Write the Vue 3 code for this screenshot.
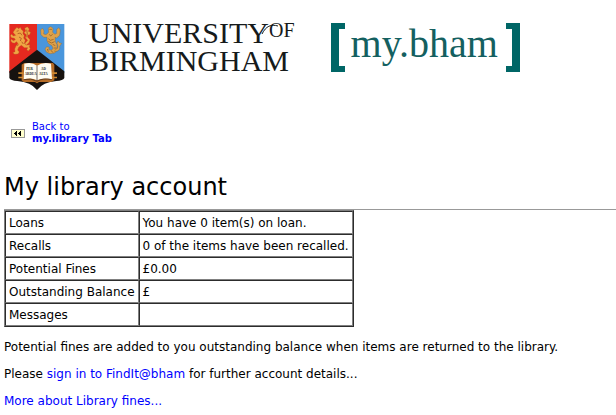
<template>
    <div class="page">
        <header class="banner">
            <a class="university" href="#">
                <svg class="crest" viewBox="27 26 166 198" role="img" aria-label="Crest">
                    <path d="M27 26H110V105L27 174Z" fill="#e5291f" />
                    <path d="M110 26H192V174L110 105Z" fill="#4a96dc" />
                    <path d="M110 103L192 168V188Q188 196 168 197Q128 200 110 224Q92 200 51 197Q31 196 27 188V168Z" fill="#17120f" />
                    <g fill="#f0a544" stroke="#a8541c" stroke-width="1">
                        <path d="M44 42L50 36L55 40L60 36L64 43L69 47L68 55L72 61L70 68L75 75L72 84L80 89L89 88L87 94L90 100L84 107L79 103L82 97L72 97L63 90L55 96L52 104L57 110L53 116L43 117L37 112L44 109L43 101L47 91L53 85L49 79L42 84L36 82L31 77L33 71L39 76L45 73L42 69L33 67L30 61L34 56L39 62L46 60L42 56L38 51Z" />
                        <path d="M74 84L82 75L75 67L78 58L71 52L76 47L73 39L81 34L87 41L84 48L91 51L88 58L83 59L82 65L89 73L86 82L77 90Z" />
                    </g>
                    <path d="M49 48L55 46M52 55L60 53L65 60M56 65L63 69L60 77M64 79L69 86M49 91L55 88M79 43L81 56L79 66" fill="none" stroke="#9b4418" stroke-width="2" />
                    <g fill="#dea24a" stroke="#8b5a22" stroke-width="1">
                        <path d="M144 39Q151 29 158 40L157 51L164 57L169 54L169 43L175 37L180 44L178 60L169 68L164 66L165 79L170 88L171 103L163 113L149 115L138 110L134 101L139 94L147 96L145 102L152 105L158 100L155 91L145 85L140 76L140 66L130 66L122 58L121 43L127 39L131 47L130 56L137 58L145 51Z" />
                        <path d="M163 109Q181 108 178 93L184 84L178 83L173 77L170 84L173 92Q174 101 164 103Z" />
                    </g>
                    <path d="M147 42H155M147 57L151 62L157 57M144 70L150 75L160 72M144 78L153 83L163 79M157 87L165 91M160 98L169 98M152 106L159 112M141 101L144 109" fill="none" stroke="#885621" stroke-width="2" />
                    <path d="M64 148L72 143L158 143L162 149V195L153 200H116L110 204L104 200H70L64 195Z" fill="#b66c27" />
                    <path d="M72 145Q95 139 110 151V195Q94 186 70 192Z" fill="#fffdf2" />
                    <path d="M152 145Q127 139 110 151V195Q128 186 155 192Z" fill="#fffdf2" />
                    <path d="M70 193Q93 187 110 198Q128 187 155 193M110 151V197" fill="none" stroke="#37251b" stroke-width="2" />
                    <path d="M54 171H69V176H54ZM54 184H69V189H54ZM155 171H170V176H155ZM155 184H170V189H155Z" fill="#d08a32" />
                    <g class="motto">
                        <text x="78" y="163">PER</text>
                        <text x="122" y="163">AD</text>
                        <text x="73" y="180">ARDUA</text>
                        <text x="116" y="180">ALTA</text>
                    </g>
                </svg>
                <span class="wordmark">
                    <span>UNIVERSITY<span class="of">OF</span></span>
                    <span>BIRMINGHAM</span>
                    <svg class="swash" viewBox="0 0 18 12" aria-hidden="true">
                        <path d="M1 11C5 3 10 1 17 3" fill="none" stroke="#161a1b" />
                    </svg>
                </span>
            </a>
            <a class="portal" href="#">my.bham</a>
        </header>

        <nav class="back">
            <a href="#">
                <svg class="rewind" viewBox="0 0 14 9" aria-hidden="true">
                    <rect width="14" height="9" fill="#999999" />
                    <rect x="1" y="1" width="12" height="7" fill="#ffffcc" />
                    <path d="M6 2V7H5V6H4V5H3V4H4V3H5V2ZM10 2V7H9V6H8V5H7V4H8V3H9V2Z" />
                </svg>
                <span>Back to<br><b>my.library Tab</b></span>
            </a>
        </nav>

        <main>
            <h1>My library account</h1>
            <table>
                <tbody>
                    <tr v-for="row in account" :key="row.label">
                        <th scope="row">{{ row.label }}</th>
                        <td>{{ row.value }}</td>
                    </tr>
                </tbody>
            </table>
            <p>Potential fines are added to you outstanding balance when items are returned to the library.</p>
            <p>Please <a href="#">sign in to FindIt@bham</a> for further account details...</p>
            <p><a href="#">More about Library fines...</a></p>
        </main>
    </div>
</template>

<script setup>
const account = [
    { label: 'Loans', value: 'You have 0 item(s) on loan.' },
    { label: 'Recalls', value: '0 of the items have been recalled.' },
    { label: 'Potential Fines', value: '£0.00' },
    { label: 'Outstanding Balance', value: '£' },
    { label: 'Messages', value: '' },
];
</script>

<style>
body {
    margin: 0;
    background: #fff;
}
</style>

<style scoped>
.page {
    font-family: Verdana, "DejaVu Sans", sans-serif;
    font-size: 12px;
    line-height: 15px;
    color: #000;
}

a {
    color: #0000ff;
    text-decoration: none;
}

.banner {
    display: flex;
    align-items: flex-start;
    gap: 36px;
    padding: 23px 9px 0;
}

.university {
    display: flex;
    gap: 24px;
    padding-top: 1px;
    color: #161a1b;
}

.crest {
    width: 56px;
    height: 66px;
}

.motto {
    font-family: "Liberation Serif", serif;
    font-size: 10px;
    font-weight: bold;
    fill: #211914;
}

.wordmark {
    position: relative;
    display: flex;
    flex-direction: column;
    margin-top: -5px;
    font-family: "Liberation Serif", serif;
    font-size: 30px;
    line-height: 28px;
    white-space: nowrap;
}

.of {
    font-size: 20px;
    line-height: 0;
    vertical-align: 6px;
}

.swash {
    position: absolute;
    top: 4px;
    right: 16px;
    width: 18px;
    height: 12px;
}

.portal {
    display: flex;
    align-items: flex-start;
    height: 49px;
    font-family: "Liberation Serif", serif;
    font-size: 40px;
    line-height: 42px;
    color: #146060;
}

.portal::before,
.portal::after {
    content: "";
    box-sizing: border-box;
    width: 14px;
    height: 49px;
    border: 6px solid #006666;
}

.portal::before {
    border-left-width: 8px;
    border-right: 0;
    margin-right: 6px;
}

.portal::after {
    border-right-width: 8px;
    border-left: 0;
    margin-left: 8px;
}

.back {
    padding: 31px 11px 0;
    font-size: 10px;
    line-height: 12px;
}

.back a {
    display: inline-flex;
    align-items: center;
    gap: 7px;
}

.rewind {
    width: 14px;
    height: 9px;
}

main {
    padding: 24px 0 0 4px;
}

h1 {
    margin: 0;
    padding: 2px 0 6px;
    border-bottom: 1px solid #999;
    font-size: 24px;
    line-height: 32px;
    font-weight: normal;
}

table {
    margin-bottom: 13px;
    border: 1px solid;
    border-color: #808080 #2c2c2c #2c2c2c #808080;
    border-spacing: 0;
}

th,
td {
    height: 15px;
    padding: 4px 3px 2px;
    border: 1px solid;
    border-color: #2c2c2c #808080 #808080 #2c2c2c;
    font-weight: normal;
    text-align: left;
}

p {
    margin: 12px 0;
}
</style>
